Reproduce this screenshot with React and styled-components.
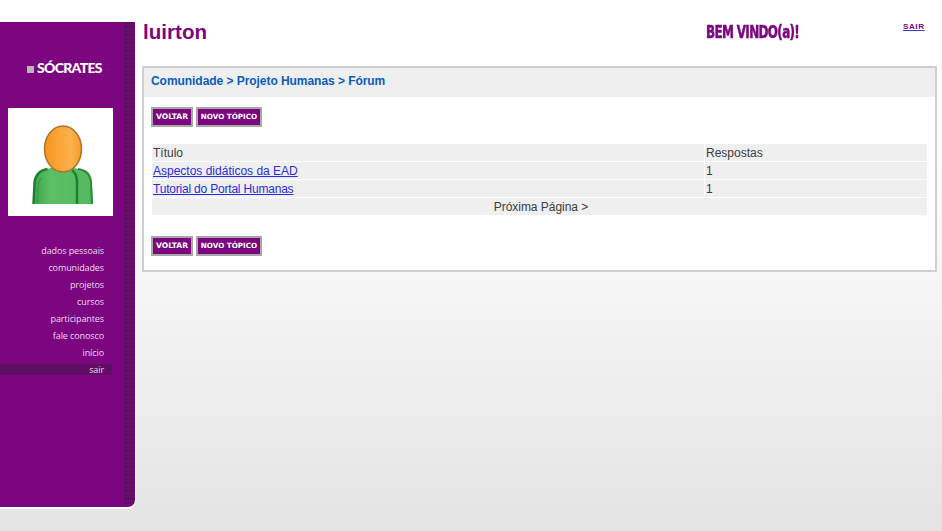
import React from "react";
import styled, { createGlobalStyle } from "styled-components";

const Global = createGlobalStyle`
  html, body { margin: 0; padding: 0; }
  body {
    min-height: 531px;
    overflow: hidden;
    font-family: "Liberation Sans", Arial, sans-serif;
    background: linear-gradient(180deg, #ffffff 0, #ffffff 160px, #e5e5e5 505px, #e5e5e5 100%);
  }
`;
const Page = styled.div`
  display: flex;
  width: 942px;
  height: 531px;
  overflow: hidden;
`;
const Sidebar = styled.aside`
  display: flex;
  width: 135px;
  height: 485px;
  margin-top: 22px;
  flex: none;
  background: #7b0680;
  border-radius: 0 0 7px 0;
  box-shadow: 0 1px 0 1px #ffffff;
  overflow: hidden;
`;
const SideBody = styled.div`
  width: 124px;
  flex: none;
  display: flex;
  flex-direction: column;
`;
const Strip = styled.div`
  width: 10px;
  flex: none;
  margin-bottom: 3px;
  border-radius: 0 0 3px 0;
  background: repeating-linear-gradient(180deg, #5e0f62 0 2px, #67106b 2px 4px);
`;
const Logo = styled.div`
  display: flex;
  align-items: center;
  gap: 3px;
  height: 18px;
  margin: 37px 0 0 27px;
`;
const LogoMark = styled.span`
  width: 7px;
  height: 7px;
  margin-top: 3px;
  background: #b9b9b9;
`;
const LogoText = styled.span`
  font: 900 14px/18px Lato, sans-serif;
  letter-spacing: -0.7px;
  color: #ffffff;
`;
const AvatarBox = styled.div`
  width: 105px;
  height: 108px;
  margin: 31px 0 0 8px;
  background: #ffffff;
  display: flex;
  align-items: center;
  justify-content: center;
`;
const Menu = styled.nav`
  display: flex;
  flex-direction: column;
  margin-top: 26px;
  width: 112px;
`;
const MenuItem = styled.a`
  height: ${(p) => (p.$active ? "11px" : "17px")};
  margin: ${(p) => (p.$active ? "3px 0 3px" : "0")};
  padding-right: 8px;
  text-align: right;
  font: 9px/${(p) => (p.$active ? "11px" : "17px")} "Open Sans", sans-serif;
  letter-spacing: -0.1px;
  color: #f0d8f0;
  background: ${(p) => (p.$active ? "#5e0f62" : "transparent")};
`;
const Main = styled.main`
  flex: 1;
  min-width: 0;
  padding: 0 5px 0 7px;
`;
const Header = styled.header`
  display: flex;
  height: 66px;
`;
const UserName = styled.h1`
  width: 563px;
  margin: 20px 0 0 1px;
  font: bold 20.6px/24px "Liberation Sans", sans-serif;
  color: #7b0680;
`;
const Welcome = styled.div`
  width: 197px;
  margin-top: 22px;
  font: bold 18px/20px "DejaVu Sans Condensed", "DejaVu Sans", sans-serif;
  letter-spacing: -0.9px;
  color: #7b0680;
  -webkit-text-stroke: 0.5px #7b0680;
  white-space: nowrap;
  transform: scaleX(0.74);
  transform-origin: left center;
`;
const Logout = styled.a`
  margin-top: 21px;
  font: bold 8px/11px "Liberation Sans", sans-serif;
  letter-spacing: 0.6px;
  color: #7b0680;
  height: 11px;
  text-decoration: underline;
  text-decoration-color: #3a3ad0;
`;
const Panel = styled.section`
  width: 791px;
  height: 202px;
  border: 2px solid #cfcfcf;
  background: #ffffff;
`;
const Crumb = styled.div`
  height: 29px;
  padding-left: 7px;
  background: #efefef;
  font: bold 12px/27px "Liberation Sans", sans-serif;
  letter-spacing: -0.05px;
  color: #0a5cc0;
`;
const Actions = styled.div`
  display: flex;
  gap: 3px;
  margin: ${(p) => p.$margin};
  padding-left: 7px;
`;
const Btn = styled.button`
  height: 20px;
  width: ${(p) => p.$w}px;
  padding: 0;
  border: 2px solid #a7a7a7;
  background: #7b0680;
  color: #ffffff;
  font: bold ${(p) => p.$size}px/16px "DejaVu Sans", sans-serif;
  white-space: nowrap;
  text-align: center;
`;
const Table = styled.div`
  display: grid;
  grid-template-columns: 552px 222px;
  gap: 1px;
  margin: 17px 0 0 8px;
  width: 775px;
  font: 12px/18px "Liberation Sans", sans-serif;
  color: #3c3c3c;
`;
const Cell = styled.div`
  height: 17px;
  padding-left: 1px;
  background: #efefef;
`;
const Pager = styled(Cell)`
  grid-column: 1 / -1;
  padding-left: 3px;
  text-align: center;
  letter-spacing: -0.03px;
`;
const TopicLink = styled.a`
  color: #2a2ae0;
  text-decoration: underline;
  letter-spacing: ${(p) => p.$spacing || 0}px;
`;

const Avatar = () => (
  <svg width="105" height="108" viewBox="0 0 105 108">
    <defs>
      <linearGradient id="face" x1="0" x2="1">
        <stop offset="0" stopColor="#f7951f" />
        <stop offset="0.72" stopColor="#fdb24c" />
        <stop offset="1" stopColor="#f49b2a" />
      </linearGradient>
      <linearGradient id="body" x1="0" x2="1">
        <stop offset="0" stopColor="#3fa54a" />
        <stop offset="0.3" stopColor="#5cc066" />
        <stop offset="1" stopColor="#55b85e" />
      </linearGradient>
      <filter id="soft">
        <feGaussianBlur stdDeviation="0.5" />
      </filter>
    </defs>
    <g filter="url(#soft)">
      <path d="M25 96l1-20c0-8 5-14 13-15l16-4 15 4c9 2 14 7 14 15l1 20z" fill="url(#body)" />
      <path d="M25.500 96l1-20c0-8 5-14 13-15" fill="none" stroke="#1f8030" strokeWidth="2.500" />
      <path d="M84 96l-1-20c0-9-5-14-13-15" fill="none" stroke="#2a8a38" strokeWidth="2" />
      <path d="M69 96V74c0-5-1-9-5-12" fill="none" stroke="#1f8030" strokeWidth="2.500" />
      <path d="M30 96V80c0-4 1-7 3-10" fill="none" stroke="#2f9a3e" strokeWidth="1" />
      <ellipse cx="55" cy="41" rx="18.500" ry="23" fill="url(#face)" stroke="#a9742c" strokeWidth="1.500" />
    </g>
  </svg>
);

export default function App() {
  const menu = ["dados pessoais", "comunidades", "projetos", "cursos", "participantes", "fale conosco", "início"];
  const actions = (margin) => (
    <Actions $margin={margin}>
      <Btn $w={42} $size={7.6}>VOLTAR</Btn>
      <Btn $w={66} $size={7.2}>NOVO TÓPICO</Btn>
    </Actions>
  );
  return (
    <Page>
      <Global />
      <Sidebar>
        <SideBody>
          <Logo>
            <LogoMark />
            <LogoText>SÓCRATES</LogoText>
          </Logo>
          <AvatarBox>
            <Avatar />
          </AvatarBox>
          <Menu>
            {menu.map((m) => (
              <MenuItem key={m}>{m}</MenuItem>
            ))}
            <MenuItem $active>sair</MenuItem>
          </Menu>
        </SideBody>
        <Strip />
      </Sidebar>
      <Main>
        <Header>
          <UserName>luirton</UserName>
          <Welcome>BEM VINDO(a)!</Welcome>
          <Logout>SAIR</Logout>
        </Header>
        <Panel>
          <Crumb>Comunidade &gt; Projeto Humanas &gt; Fórum</Crumb>
          {actions("10px 0 0")}
          <Table>
            <Cell>Título</Cell>
            <Cell>Respostas</Cell>
            <Cell>
              <TopicLink>Aspectos didáticos da EAD</TopicLink>
            </Cell>
            <Cell>1</Cell>
            <Cell>
              <TopicLink $spacing={-0.2}>Tutorial do Portal Humanas</TopicLink>
            </Cell>
            <Cell>1</Cell>
            <Pager>Próxima Página &gt;</Pager>
          </Table>
          {actions("21px 0 0")}
        </Panel>
      </Main>
    </Page>
  );
}
